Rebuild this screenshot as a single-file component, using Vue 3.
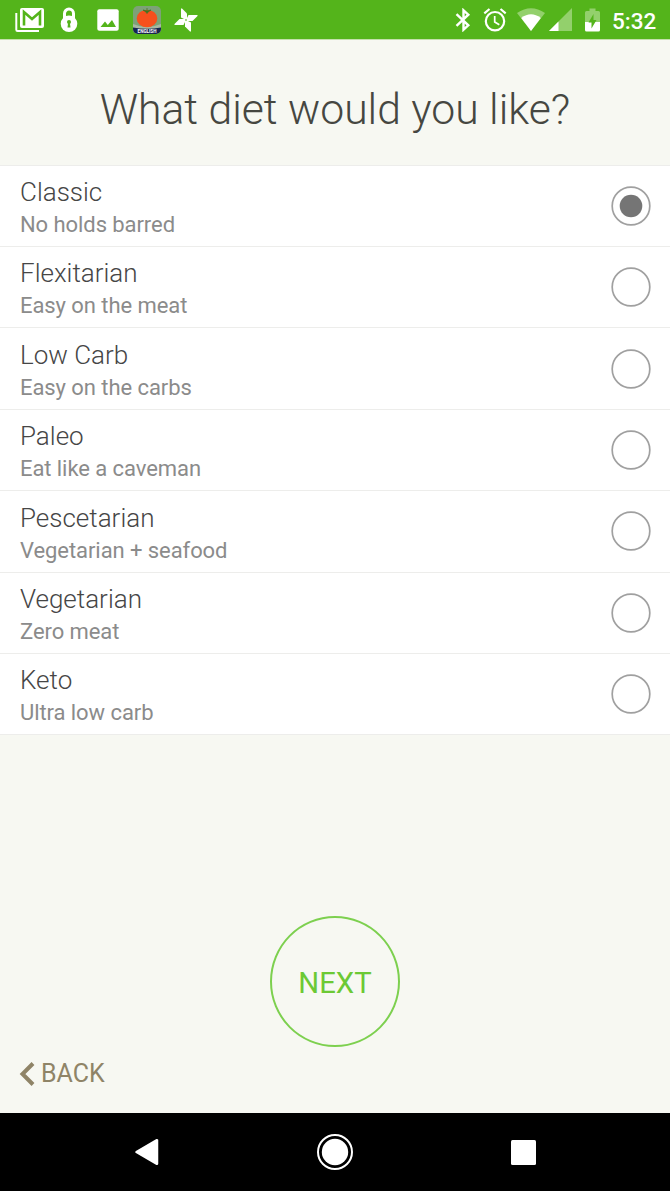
<script setup>
	import {ref} from 'vue'

	const selected = ref('Classic')

	const diets = [
		{name: 'Classic', info: 'No holds barred'},
		{name: 'Flexitarian', info: 'Easy on the meat'},
		{name: 'Low Carb', info: 'Easy on the carbs'},
		{name: 'Paleo', info: 'Eat like a caveman'},
		{name: 'Pescetarian', info: 'Vegetarian + seafood'},
		{name: 'Vegetarian', info: 'Zero meat'},
		{name: 'Keto', info: 'Ultra low carb'},
	]
</script>

<template>
	<div class="screen">
		<div class="status">
			<!-- mail -->
			<svg class="mail" width="30" height="26" viewBox="0 0 30 26">
				<path d="M1.300 6V22.700Q1.300 24 2.600 24H24" fill="none" stroke="#fff" stroke-width="2" />
				<rect x="5" y="1" width="24" height="20" rx="2" fill="#fff" />
				<path d="M9 18.500V5L17 12L25 5V18.500" fill="none" stroke="#54b41b" stroke-width="2.600" />
			</svg>
			<!-- lock -->
			<svg class="lock" width="18" height="26" viewBox="0 0 18 26">
				<path d="M4.500 13V6.500a4.500 4.500 0 0 1 9 0V13" fill="none" stroke="#fff" stroke-width="3" />
				<circle cx="9" cy="16.800" r="8.300" fill="#fff" />
				<circle cx="9" cy="15" r="2" fill="#54b41b" />
				<path d="M8.100 16H9.900L10.500 20.500H7.500Z" fill="#54b41b" />
			</svg>
			<!-- image -->
			<svg class="image" width="22" height="22" viewBox="0 0 22 22">
				<rect x="0.300" y="0.300" width="21.400" height="21.400" rx="2" fill="#fff" />
				<path d="M3.500 18L8 12.500L10.800 16L15 11L19 18Z" fill="#54b41b" />
			</svg>
			<!-- tomato timer -->
			<svg class="tomato" width="28" height="28" viewBox="0 0 28 28">
				<clipPath id="tile"><rect width="28" height="28" rx="5" /></clipPath>
				<g clip-path="url(#tile)">
					<rect width="28" height="28" fill="#7da277" />
					<path d="M0 18Q14 24 28 18V28H0Z" fill="#a9b7a2" />
					<path d="M0 21.500Q14 24 28 21.500V28H0Z" fill="#17264f" />
					<ellipse cx="14" cy="12.500" rx="10.300" ry="8.700" fill="#f6501d" />
					<path d="M14 2V5M10 4L14 5L18 4L15 6L14 7.500L13 6Z" fill="#397622" stroke="#397622" stroke-width="0.700" />
				</g>
				<text x="14" y="26.700" text-anchor="middle">ENGLISH</text>
			</svg>
			<!-- pinwheel -->
			<svg class="pinwheel" width="24" height="24" viewBox="0 0 24 24">
				<g fill="#fff">
					<path
						v-for="n in 4"
						:key="n"
						d="M7 0.500H8L13 5.500V11.500H11L7 9.500Z"
						:transform="`rotate(${n * 90} 12 12)`"
					/>
				</g>
				<circle cx="12" cy="12" r="0.900" fill="#93d06c" />
			</svg>

			<!-- bluetooth -->
			<svg class="bluetooth" width="16" height="24" viewBox="0 0 16 24">
				<path d="M1.500 6.200L13.300 17.300L8.500 21.700V2.300L13.300 6.700L1.500 17.800" fill="none" stroke="#fff" stroke-width="2.400" />
			</svg>
			<!-- alarm -->
			<svg class="alarm" width="24" height="24" viewBox="0 0 24 24">
				<circle cx="12" cy="13.200" r="9.200" fill="none" stroke="#fff" stroke-width="2.200" />
				<path d="M1.300 5.300L6.500 1M22.700 5.300L17.500 1" stroke="#fff" stroke-width="2.200" />
				<path d="M11.700 8V14L16.300 16.800" fill="none" stroke="#fff" stroke-width="1.700" />
			</svg>
			<!-- wifi -->
			<svg class="wifi" width="28" height="24" viewBox="0 0 28 24">
				<path d="M0 5Q14 -4.500 28 5L14 23Z" fill="#93d06c" />
				<path d="M4.200 10Q14 2.500 23.800 10L14 23Z" fill="#fff" />
			</svg>
			<!-- signal -->
			<svg class="signal" width="23" height="23" viewBox="0 0 23 23">
				<path d="M23 0V23H0Z" fill="#93d06c" />
				<path d="M9.500 13.500V23H0Z" fill="#fff" />
			</svg>
			<!-- battery -->
			<svg class="battery" width="15" height="24" viewBox="0 0 15 24">
				<path d="M4.500 0.500H10.500V3H13.500Q15 3 15 4.500V14H0V4.500Q0 3 1.500 3H4.500Z" fill="#93d06c" />
				<path d="M0 14H15V22Q15 23.500 13.500 23.500H1.500Q0 23.500 0 22Z" fill="#fff" />
				<path d="M8.500 6L3.500 14.500H6.500V20.500L11.500 12H8.500Z" fill="#54b41b" />
			</svg>
			<span class="time">5:32</span>
		</div>

		<h1>What diet would you like?</h1>

		<div class="list">
			<div v-for="diet in diets" :key="diet.name" class="row" @click="selected = diet.name">
				<div class="label">
					<div class="name">{{ diet.name }}</div>
					<div class="info">{{ diet.info }}</div>
				</div>
				<svg class="radio" width="40" height="40" viewBox="0 0 40 40">
					<circle cx="20" cy="20" r="18.800" fill="none" stroke="#a0a0a0" stroke-width="1.700" />
					<circle v-if="selected == diet.name" cx="20" cy="20" r="11.300" fill="#757575" />
				</svg>
			</div>
		</div>

		<div class="footer">
			<button class="next">NEXT</button>
			<button class="back">
				<svg width="16" height="24" viewBox="0 0 16 24">
					<path d="M14 1.500L3.500 12L14 22.500" fill="none" stroke="#8f8467" stroke-width="4" />
				</svg>
				<span>BACK</span>
			</button>
		</div>

		<div class="nav">
			<svg width="25" height="28" viewBox="0 0 25 28">
				<path d="M2.500 14L23 2.200V25.800Z" fill="#fff" stroke="#fff" stroke-width="2.500" stroke-linejoin="round" />
			</svg>
			<svg width="36" height="36" viewBox="0 0 36 36">
				<circle cx="18" cy="18" r="17" fill="none" stroke="#fff" stroke-width="2" />
				<circle cx="18" cy="18" r="13.200" fill="#fff" />
			</svg>
			<svg width="25" height="25" viewBox="0 0 25 25">
				<rect width="25" height="25" rx="1.500" fill="#fff" />
			</svg>
		</div>
	</div>
</template>

<style>
	body{
		margin: 0;
	}
</style>

<style scoped>
	.screen{
		height: 1191px;
		background: #f7f8f2;
		font-family: Roboto, sans-serif;
		overflow: hidden;

		display: flex;
		flex-direction: column;
	}

	svg{
		display: block;
		flex: none;
	}

	.status{
		height: 40px;
		border-bottom: 1px solid #c4e0ac;
		background: #54b41b;
		box-sizing: border-box;

		display: flex;
		align-items: center;
	}
	.mail{margin-left: 15px;}
	.lock{margin-left: 14.5px;}
	.image{margin-left: 19.5px;}
	.tomato{margin-left: 14px;}
	.tomato text{
		font-size: 4.6px;
		font-weight: 700;
		fill: #fff;
	}
	.pinwheel{margin-left: 13px;}
	.bluetooth{margin-left: auto;}
	.alarm{margin-left: 12px;}
	.wifi{margin-left: 10px;}
	.signal{margin-left: 4px;}
	.battery{margin-left: 13px;}
	.time{
		width: 45px;
		margin: 2px 13px 0 12px;
		color: #fff;
		font-size: 22.5px;
		font-weight: 500;
		white-space: nowrap;
	}

	h1{
		height: 124.6px;
		margin: 0;
		padding-top: 13px;
		box-sizing: border-box;
		color: #464741;
		font-size: 42.7px;
		font-weight: 300;
		white-space: nowrap;

		display: flex;
		align-items: center;
		justify-content: center;
	}

	.list{
		border-top: 1px solid #ededeb;
	}

	.row{
		height: 81.4px;
		box-sizing: border-box;
		border-bottom: 1px solid #ededeb;
		padding: 0 19px 0 20px;
		background: #fff;

		display: flex;
		align-items: center;
		justify-content: space-between;
	}

	.label{
		padding-top: 4.6px;
	}

	.name{
		color: #464646;
		font-size: 26px;
		font-weight: 300;
		line-height: 33px;
	}

	.info{
		color: #8b8b8b;
		font-size: 22px;
		line-height: 31px;
		letter-spacing: -0.07px;
	}

	.footer{
		flex: 1;

		display: flex;
		flex-direction: column;
		align-items: center;
		justify-content: flex-end;
	}

	button{
		border: 0;
		padding: 0;
		background: none;
		font-family: inherit;
	}

	.next{
		width: 130px;
		height: 131px;
		border: 2px solid #7dd04f;
		border-radius: 50%;
		padding-top: 3px;
		color: #6cc934;
		font-size: 29.3px;
	}

	.back{
		align-self: flex-start;
		margin: 12px 0 25px 19px;
		color: #8f8467;
		font-size: 25px;

		display: flex;
		align-items: center;
		gap: 6px;
	}

	.nav{
		height: 78px;
		background: #000;
		padding: 0 134px;

		display: flex;
		align-items: center;
		justify-content: space-between;
	}
</style>
